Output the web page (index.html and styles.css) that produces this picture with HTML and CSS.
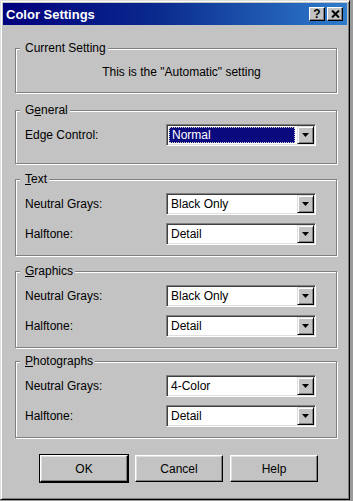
FILE: index.html
```html
<!DOCTYPE html>
<html>
  <head>
    <link rel="stylesheet" href="styles.css">
  </head>
  <body>
    <div class="window">
      <div class="titlebar">
        <span class="title">Color Settings</span>
        <div class="title-buttons">
          <span class="tbtn help">?</span>
          <span class="tbtn"><svg width="9" height="8" viewBox="0 0 9 8"><path d="M1 0.5 L8 7.5 M8 0.5 L1 7.5" stroke="#000" stroke-width="2"/></svg></span>
        </div>
      </div>

      <div class="dialog">
        <fieldset class="group current">
          <legend>Current Setting</legend>
          <p class="current-text">This is the "Automatic" setting</p>
        </fieldset>

        <fieldset class="group general">
          <legend>G<u>e</u>neral</legend>
          <div class="row">
            <span class="label">Edge Control:</span>
            <div class="combo focused">
              <span class="value">Normal</span>
              <span class="arrow"><svg width="7" height="4" viewBox="0 0 7 4"><path d="M0 0h7L3.5 4z"/></svg></span>
            </div>
          </div>
        </fieldset>

        <fieldset class="group">
          <legend><u>T</u>ext</legend>
          <div class="row">
            <span class="label">Neutral Grays:</span>
            <div class="combo">
              <span class="value">Black Only</span>
              <span class="arrow"><svg width="7" height="4" viewBox="0 0 7 4"><path d="M0 0h7L3.5 4z"/></svg></span>
            </div>
          </div>
          <div class="row">
            <span class="label">Halftone:</span>
            <div class="combo">
              <span class="value">Detail</span>
              <span class="arrow"><svg width="7" height="4" viewBox="0 0 7 4"><path d="M0 0h7L3.5 4z"/></svg></span>
            </div>
          </div>
        </fieldset>

        <fieldset class="group graphics">
          <legend><u>G</u>raphics</legend>
          <div class="row">
            <span class="label">Neutral Grays:</span>
            <div class="combo">
              <span class="value">Black Only</span>
              <span class="arrow"><svg width="7" height="4" viewBox="0 0 7 4"><path d="M0 0h7L3.5 4z"/></svg></span>
            </div>
          </div>
          <div class="row">
            <span class="label">Halftone:</span>
            <div class="combo">
              <span class="value">Detail</span>
              <span class="arrow"><svg width="7" height="4" viewBox="0 0 7 4"><path d="M0 0h7L3.5 4z"/></svg></span>
            </div>
          </div>
        </fieldset>

        <fieldset class="group photos">
          <legend><u>P</u>hotographs</legend>
          <div class="row">
            <span class="label">Neutral Grays:</span>
            <div class="combo">
              <span class="value">4-Color</span>
              <span class="arrow"><svg width="7" height="4" viewBox="0 0 7 4"><path d="M0 0h7L3.5 4z"/></svg></span>
            </div>
          </div>
          <div class="row">
            <span class="label">Halftone:</span>
            <div class="combo">
              <span class="value">Detail</span>
              <span class="arrow"><svg width="7" height="4" viewBox="0 0 7 4"><path d="M0 0h7L3.5 4z"/></svg></span>
            </div>
          </div>
        </fieldset>

        <div class="buttons">
          <button class="btn default">OK</button>
          <button class="btn">Cancel</button>
          <button class="btn">Help</button>
        </div>
      </div>
    </div>
  </body>
</html>
```

FILE: styles.css
```css
/* dialog estilo windows 98 */
body {
  margin: 0;
  background-color: #9a9a9a;
  font-family: "Liberation Sans", Arial, sans-serif;
  font-size: 12px;
  color: #000;
}

.window {
  width: 350px;
  height: 500px;
  box-sizing: border-box;
  background-color: #c3c3c3;
  border: 1px solid;
  border-color: #dfdfdf #000 #000 #dfdfdf;
  box-shadow: inset 1px 1px #fff, inset -1px -1px #808080;
  padding: 2px;
}

/* barra de titulo */
.titlebar {
  height: 22px;
  display: flex;
  align-items: center;
  justify-content: space-between;
  padding: 0 4px 0 3px;
  background: linear-gradient(90deg, #00007c 0%, #0a2a8e 45%, #2f7ccc 100%);
}

.title {
  color: #fff;
  font-weight: bold;
  font-size: 13px;
}

.title-buttons {
  display: flex;
  gap: 2px;
}

.tbtn {
  width: 16px;
  height: 14px;
  box-sizing: border-box;
  display: flex;
  align-items: center;
  justify-content: center;
  background-color: #c3c3c3;
  border: 1px solid;
  border-color: #fff #000 #000 #fff;
  box-shadow: inset -1px -1px #808080;
  font-weight: bold;
  font-size: 12px;
  line-height: 1;
}

/* conteudo */
.dialog {
  padding: 16px 10px 0 12px;
  display: flex;
  flex-direction: column;
  gap: 8px;
}

.group {
  margin: 0;
  padding: 7px 20px 10px 9px;
  border: 1px solid #808080;
  box-shadow: inset 1px 1px #fff, 1px 1px #fff;
}

.group legend {
  margin-left: -5px;
  padding: 0 2px 0 5px;
  line-height: 14px;
  background-color: #c3c3c3;
}

.current {
  padding-top: 10px;
  padding-bottom: 13px;
}

.general {
  margin-top: 2px;
  padding-bottom: 17px;
}

.photos {
  margin-top: -2px;
}

.current-text {
  margin: 0;
  padding-left: 22px;
  line-height: 14px;
  text-align: center;
}

.row {
  display: flex;
  align-items: center;
  height: 22px;
}

.row + .row {
  margin-top: 8px;
}

.label {
  width: 141px;
}

/* combobox */
.combo {
  width: 150px;
  height: 22px;
  box-sizing: border-box;
  display: flex;
  align-items: stretch;
  background-color: #fff;
  border: 1px solid;
  border-color: #808080 #fff #fff #808080;
  box-shadow: inset 1px 1px #404040, inset -1px -1px #dfdfdf;
  padding: 1px;
}

.value {
  flex: 1;
  display: flex;
  align-items: center;
  padding-left: 3px;
}

.focused .value {
  margin: 1px 2px 1px 1px;
  padding-left: 2px;
  background-color: #0a0a7e;
  color: #fff;
  border: 1px dotted #d0d0d0;
}

.arrow {
  width: 17px;
  box-sizing: border-box;
  display: flex;
  align-items: center;
  justify-content: center;
  background-color: #c3c3c3;
  border: 1px solid;
  border-color: #dfdfdf #000 #000 #dfdfdf;
  box-shadow: inset 1px 1px #fff, inset -1px -1px #808080;
}

/* botoes */
.buttons {
  display: flex;
  gap: 7px;
  margin-top: 9px;
  padding-left: 25px;
}

.btn {
  width: 88px;
  height: 27px;
  padding: 0;
  font-family: "Liberation Sans", Arial, sans-serif;
  font-size: 12px;
  background-color: #c3c3c3;
  border: 1px solid;
  border-color: #fff #000 #000 #fff;
  box-shadow: inset -1px -1px #808080, inset 1px 1px #dfdfdf;
}

.default {
  outline: 1px solid #000;
}
```
